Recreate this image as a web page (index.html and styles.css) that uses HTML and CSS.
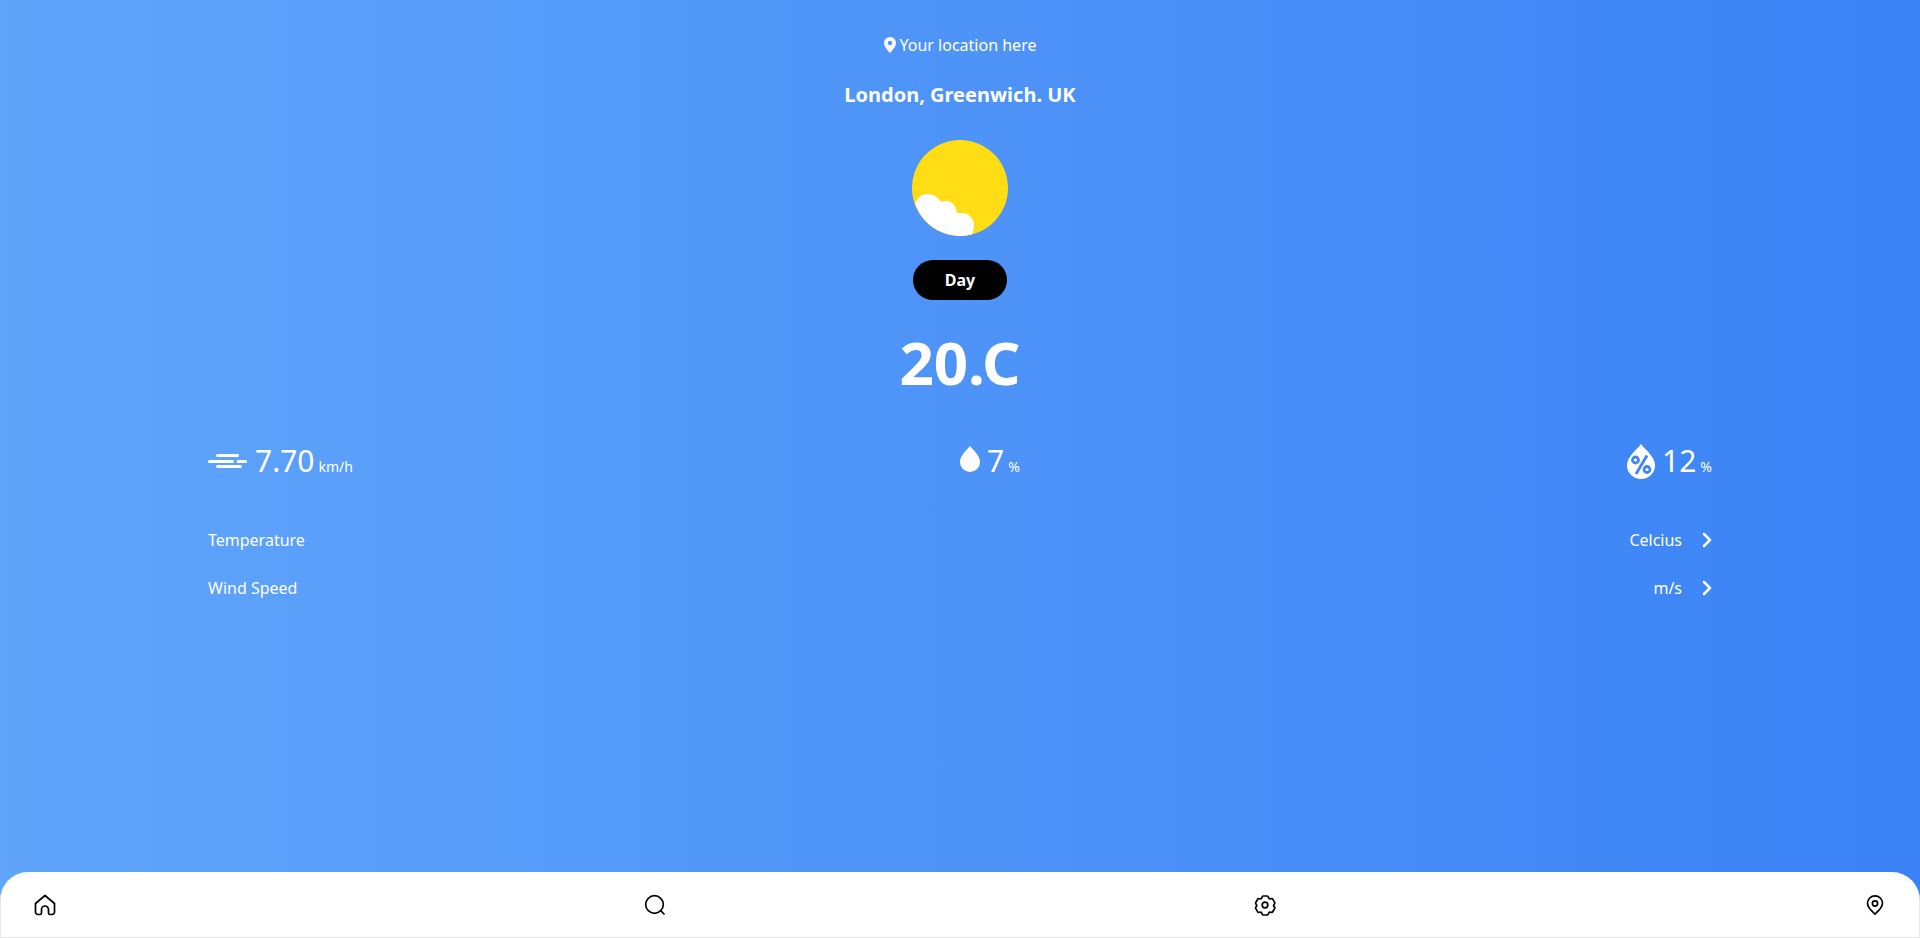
FILE: index.html
```html
<!DOCTYPE html>
<html lang="en">
<head>
  <meta charset="UTF-8">
  <title>Weather</title>
  <link rel="stylesheet" href="styles.css">
</head>
<body>
<div class="app">
  <main class="conteudo">
    <p class="local">
      <svg class="pin" viewBox="0 0 12 16"><path fill="#fff" fill-rule="evenodd" d="M6 0a6 6 0 0 0-6 6c0 3.600 4 7.800 6 10 2-2.200 6-6.400 6-10a6 6 0 0 0-6-6zm0 3.800a2.200 2.200 0 1 1 0 4.400 2.200 2.200 0 0 1 0-4.400z"/></svg>
      Your location here
    </p>
    <h1 class="cidade">London, Greenwich. UK</h1>

    <svg class="sol" viewBox="0 0 96 96">
      <circle cx="48" cy="48" r="48" fill="#ffdd15"/>
      <path fill="#fff" d="M3.200 64C5 58 10 54 15 54c6 0 11 3 14 8 2-1 4-1 6-1 5 0 9 5 10 12h5c7 0 12 6 12 12 0 3-1 6-2 9.500A48 48 0 0 1 3.200 64z"/>
    </svg>

    <div class="pilula">Day</div>
    <div class="temp">20.C</div>

    <div class="dados">
      <div class="dado">
        <svg class="i-vento" viewBox="0 0 39 14"><g stroke="#fff" stroke-width="3" stroke-linecap="round"><path d="M9.500 1.500h20M1.500 7.500h23M30 7.500h7.500M9.500 12.500h23"/></g></svg>
        <span class="valor">7.70</span><span class="unidade">km/h</span>
      </div>
      <div class="dado">
        <svg class="i-gota" viewBox="0 0 20 26"><path fill="#fff" d="M10 0c3 4 10 9.500 10 16a10 10 0 0 1-20 0C0 9.500 7 4 10 0z"/></svg>
        <span class="valor">7</span><span class="unidade">%</span>
      </div>
      <div class="dado">
        <svg class="i-umidade" viewBox="0 0 28 35"><path fill="#fff" d="M14 0c4 5.500 14 12.500 14 21.500a14 13.500 0 0 1-28 0C0 12.500 10 5.500 14 0z"/><g fill="none" stroke="#4285f6" stroke-width="2.800"><circle cx="8.500" cy="16" r="3"/><circle cx="20" cy="25.500" r="3"/><path d="M20 11.500 9 30"/></g></svg>
        <span class="valor">12</span><span class="unidade">%</span>
      </div>
    </div>

    <div class="linha">
      <span>Temperature</span>
      <span class="opcao">Celcius <svg class="seta" viewBox="0 0 10 16"><path d="M2 2l6 6-6 6" fill="none" stroke="#fff" stroke-width="2.500" stroke-linecap="round" stroke-linejoin="round"/></svg></span>
    </div>
    <div class="linha">
      <span>Wind Speed</span>
      <span class="opcao">m/s <svg class="seta" viewBox="0 0 10 16"><path d="M2 2l6 6-6 6" fill="none" stroke="#fff" stroke-width="2.500" stroke-linecap="round" stroke-linejoin="round"/></svg></span>
    </div>
  </main>

  <nav class="menu">
    <svg class="icone" viewBox="0 0 24 24"><path d="M2.500 10.500 12 2.500l9.500 8v8.500a2.500 2.500 0 0 1-2.500 2.500h-2a1.500 1.500 0 0 1-1.500-1.500v-3.500a3.500 3.500 0 0 0-7 0V20A1.500 1.500 0 0 1 7 21.500H5A2.500 2.500 0 0 1 2.500 19z"/></svg>
    <svg class="icone" viewBox="0 0 24 24"><circle cx="11.500" cy="11.500" r="8.800"/><path d="M18 18l3 3"/></svg>
    <svg class="icone" viewBox="0 0 24 24"><circle cx="12" cy="12" r="2.800"/><path d="M10 3h4c.8 0 1 .6 1.200 1.300.3 1.100 1.400 1.800 2.500 1.500.7-.2 1.400-.3 1.800.4l2 3.400c.4.700 0 1.200-.5 1.700-.8.800-.8 1.600 0 2.400.5.500.9 1 .5 1.700l-2 3.400c-.4.700-1.100.6-1.800.4-1.100-.3-2.200.4-2.500 1.500-.2.700-.4 1.300-1.200 1.300h-4c-.8 0-1-.6-1.200-1.300-.3-1.100-1.400-1.800-2.500-1.500-.7.2-1.400.3-1.800-.4l-2-3.400c-.4-.7 0-1.200.5-1.700.8-.8.8-1.600 0-2.400-.5-.5-.9-1-.5-1.700l2-3.400c.4-.7 1.100-.6 1.800-.4 1.100.3 2.200-.4 2.500-1.500.2-.7.4-1.300 1.200-1.300z" transform="translate(.2 0)"/></svg>
    <svg class="icone" viewBox="0 0 24 24"><circle cx="12" cy="10.500" r="2.600"/><path d="M12 21c-2-1.800-7.500-6-7.500-10.700a7.500 7.500 0 0 1 15 0C19.500 15 14 19.200 12 21z"/></svg>
  </nav>
</div>
</body>
</html>
```

FILE: styles.css
```css
* {
  box-sizing: border-box;
}
body {
  font-family: "Noto Sans", sans-serif;
  margin: 0;
  color: #fff;
}
.app {
  height: 938px;
  display: flex;
  flex-direction: column;
  justify-content: space-between;
  background: linear-gradient(to right, #60a5fa, #3b82f6);
  overflow: hidden;
}
.conteudo {
  display: flex;
  flex-direction: column;
  align-items: center;
  padding: 32px 208px 0;
}
.local {
  margin: 0;
  height: 26px;
  display: flex;
  align-items: center;
  gap: 4px;
  font-size: 16px;
  line-height: 26px;
}
.pin {
  width: 12px;
  height: 16px;
}
.cidade {
  margin: 23px 0 0;
  font-size: 20px;
  line-height: 28px;
  font-weight: 700;
}
.sol {
  width: 96px;
  height: 96px;
  margin-top: 31px;
}
.pilula {
  width: 94px;
  height: 40px;
  margin-top: 24px;
  border-radius: 20px;
  background: #000;
  font-weight: 700;
  font-size: 16px;
  line-height: 40px;
  text-align: center;
}
.temp {
  margin-top: 22px;
  font-size: 60px;
  line-height: 80px;
  font-weight: 700;
}
.dados {
  width: 100%;
  margin-top: 37px;
  display: flex;
  justify-content: space-between;
}
.dado {
  display: flex;
  align-items: center;
  height: 44px;
}
.valor {
  font-size: 30px;
  line-height: 44px;
  margin-left: 7px;
}
.unidade {
  font-size: 14px;
  margin: 10px 0 0 4px;
}
.i-vento {
  width: 39px;
  height: 14px;
  margin-right: 1px;
}
.i-gota {
  width: 20px;
  height: 26px;
  margin-bottom: 5px;
}
.i-umidade {
  width: 28px;
  height: 35px;
}
.linha {
  width: 100%;
  display: flex;
  justify-content: space-between;
  align-items: center;
  height: 24px;
  margin-top: 24px;
  font-size: 16px;
}
.dados + .linha {
  margin-top: 45px;
}
.opcao {
  display: flex;
  align-items: center;
  gap: 20px;
}
.seta {
  width: 10px;
  height: 16px;
}
.menu {
  height: 66px;
  background: #fff;
  border: 1px solid #e5e7eb;
  border-top: none;
  border-radius: 28px 28px 0 0;
  display: flex;
  justify-content: space-between;
  align-items: center;
  padding: 0 32px;
}
.icone {
  width: 24px;
  height: 24px;
  fill: none;
  stroke: #000;
  stroke-width: 1.700;
  stroke-linecap: round;
  stroke-linejoin: round;
}
```
